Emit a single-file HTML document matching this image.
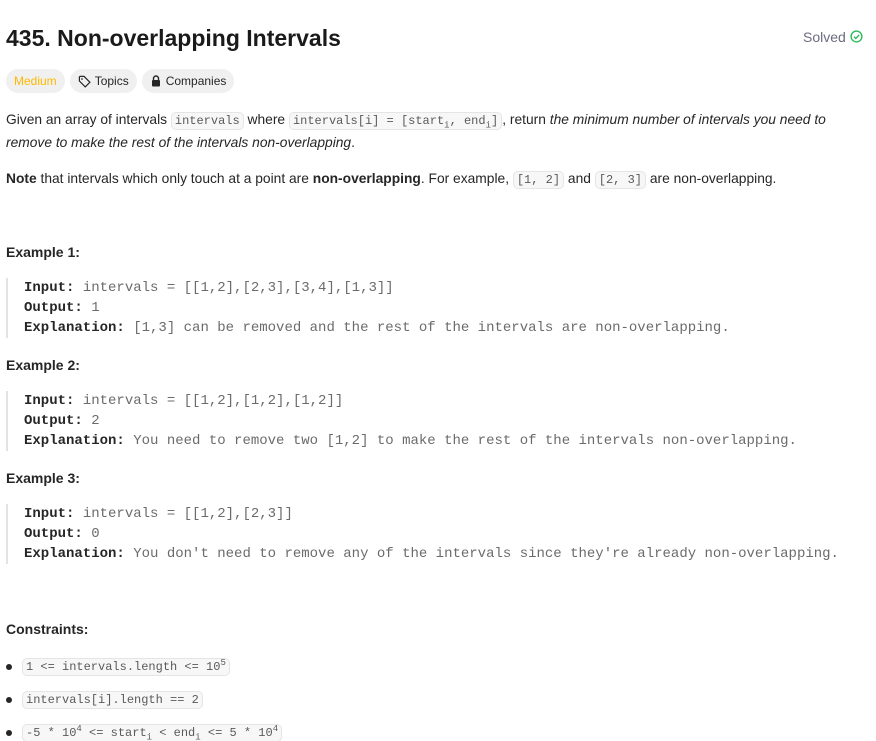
<!DOCTYPE html>
<html><head><meta charset="utf-8"><style>
body{margin:0;background:#fff;font-family:"Liberation Sans",sans-serif;color:#262626;font-size:14px;}
.wrap{position:relative;width:876px;height:741px;overflow:hidden;}
h1{position:absolute;left:6px;top:25px;margin:0;font-size:23px;font-weight:bold;color:#1a1a1a;}
.solved{position:absolute;left:803px;top:29px;font-size:14px;color:#6b6b80;}
.tags{position:absolute;left:6px;top:69px;display:flex;gap:5px;}
.tag{height:24px;border-radius:12px;background:#f0f0f0;font-size:12px;line-height:24px;padding:0 8px;display:flex;align-items:center;gap:4px;color:#262626}
.p{position:absolute;left:6px;line-height:22px;font-size:13.8px}
code{font-family:"Liberation Mono",monospace;font-size:12px;background:#f7f7f7;border:1px solid #e5e5e5;border-radius:5px;padding:1px 3px;color:#5a5a5a}
sub,sup{line-height:0;font-size:9px}
.ex{position:absolute;left:6px;font-weight:bold;font-size:14px;}
pre{position:absolute;left:6px;margin:0;border-left:2px solid #e3e3e3;padding-left:16px;font-family:"Liberation Mono",monospace;font-size:14px;line-height:20px;color:#6b6b6b;}
pre b{color:#262626}
ul{position:absolute;left:6px;top:650px;margin:0;padding:0;list-style:none}
li{height:33px;display:flex;align-items:center;}
li:before{content:"";width:6px;height:6px;border-radius:3px;background:#262626;margin-right:10px}
</style></head><body><div class="wrap">
<h1>435. Non-overlapping Intervals</h1>
<div class="solved">Solved <svg width="13" height="13" viewBox="0 0 14 14" style="vertical-align:-1px"><circle cx="7" cy="7" r="5.8" fill="none" stroke="#2cbb5d" stroke-width="1.5"/><path d="M4.3 7.2l1.9 1.9 3.6-3.7" fill="none" stroke="#2cbb5d" stroke-width="1.5"/></svg></div>
<div class="tags"><div class="tag" style="color:#ffb800">Medium</div>
<div class="tag"><svg width="13" height="13" viewBox="0 0 14 14"><path d="M1.5 2.2v4.3l6.3 6.3 5-5-6.3-6.3H2.2z" fill="none" stroke="#262626" stroke-width="1.3"/><circle cx="4.3" cy="4.3" r="0.9" fill="#262626"/></svg>Topics</div>
<div class="tag"><svg width="12" height="12" viewBox="0 0 12 12"><path d="M3.5 5V3.5a2.5 2.5 0 015 0V5" fill="none" stroke="#262626" stroke-width="1.4"/><rect x="2" y="5" width="8" height="6.5" rx="1" fill="#262626"/></svg>Companies</div></div>
<div class="p" style="top:109px">Given an array of intervals <code>intervals</code> where <code>intervals[i] = [start<sub>i</sub>, end<sub>i</sub>]</code>, return <i>the minimum number of intervals you need to</i><br><i>remove to make the rest of the intervals non-overlapping</i>.</div>
<div class="p" style="top:168px"><b>Note</b> that intervals which only touch at a point are <b>non-overlapping</b>. For example, <code>[1, 2]</code> and <code>[2, 3]</code> are non-overlapping.</div>
<div class="ex" style="top:244px">Example 1:</div>
<pre style="top:278px"><b>Input:</b> intervals = [[1,2],[2,3],[3,4],[1,3]]
<b>Output:</b> 1
<b>Explanation:</b> [1,3] can be removed and the rest of the intervals are non-overlapping.</pre>
<div class="ex" style="top:357px">Example 2:</div>
<pre style="top:391px"><b>Input:</b> intervals = [[1,2],[1,2],[1,2]]
<b>Output:</b> 2
<b>Explanation:</b> You need to remove two [1,2] to make the rest of the intervals non-overlapping.</pre>
<div class="ex" style="top:470px">Example 3:</div>
<pre style="top:504px"><b>Input:</b> intervals = [[1,2],[2,3]]
<b>Output:</b> 0
<b>Explanation:</b> You don't need to remove any of the intervals since they're already non-overlapping.</pre>
<div class="ex" style="top:621px">Constraints:</div>
<ul><li><code>1 &lt;= intervals.length &lt;= 10<sup>5</sup></code></li>
<li><code>intervals[i].length == 2</code></li>
<li><code>-5 * 10<sup>4</sup> &lt;= start<sub>i</sub> &lt; end<sub>i</sub> &lt;= 5 * 10<sup>4</sup></code></li></ul>
</div></body></html>
